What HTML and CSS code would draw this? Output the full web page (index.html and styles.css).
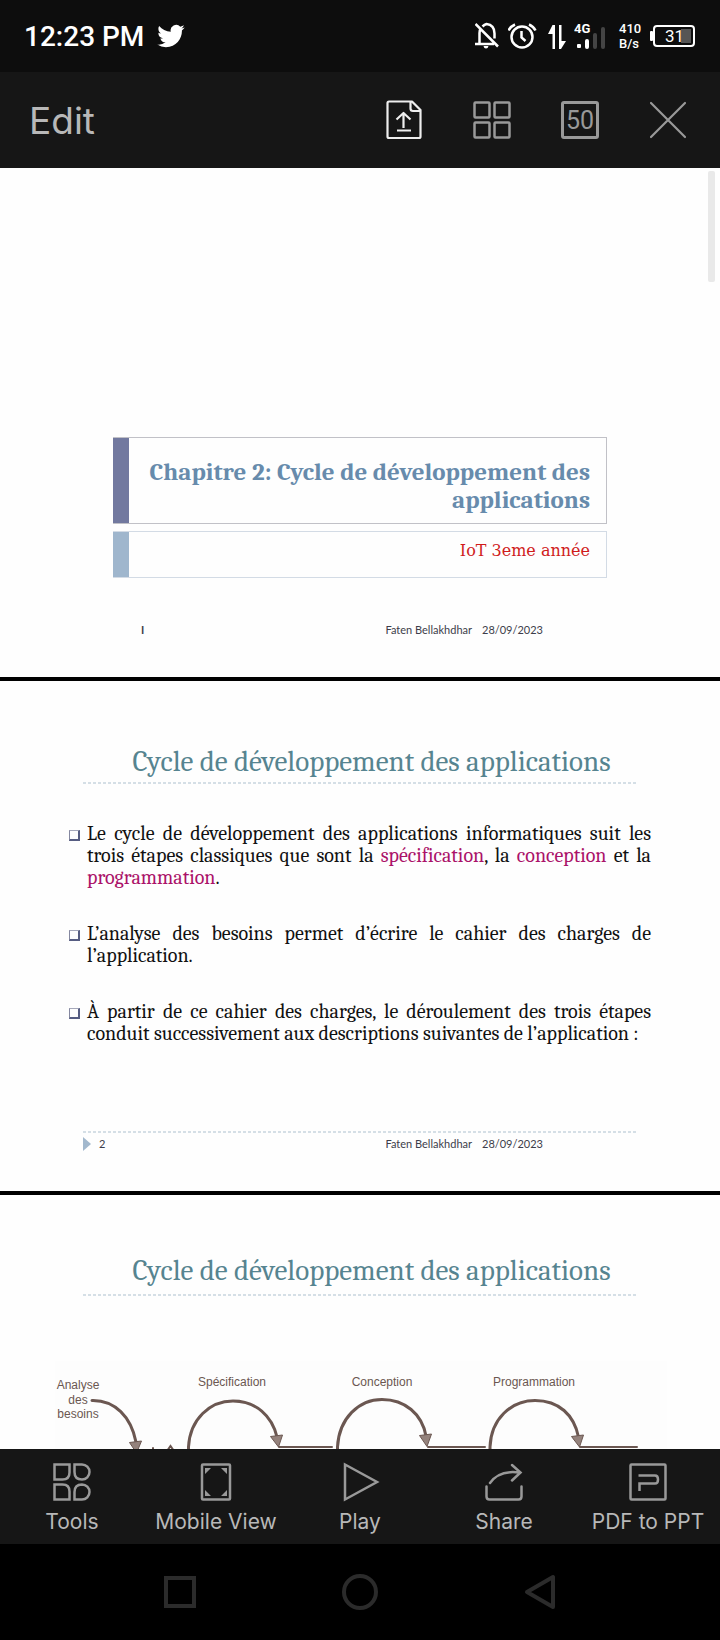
FILE: index.html
```html
<!DOCTYPE html>
<html lang="fr">
<head>
<meta charset="utf-8">
<meta name="viewport" content="width=device-width, initial-scale=1">
<title>Chapitre 2: Cycle de développement des applications</title>
<link rel="stylesheet" href="styles.css">
</head>
<body>
<div class="screen">
  <header class="status">
    <span class="clock">12:23 PM</span>
    <svg class="bird" width="28" height="24" viewBox="0 1.500 24 21" aria-hidden="true"><path fill="#fff" d="M23.950 4.570a10 10 0 0 1-2.820.770 4.960 4.960 0 0 0 2.160-2.720c-.950.550-2 .950-3.130 1.180a4.920 4.920 0 0 0-8.380 4.480C7.690 8.090 4.070 6.130 1.640 3.160a4.820 4.820 0 0 0-.670 2.470c0 1.710.870 3.210 2.190 4.100a4.900 4.900 0 0 1-2.230-.610v.060a4.920 4.920 0 0 0 3.950 4.830 5 5 0 0 1-2.210.080 4.940 4.940 0 0 0 4.600 3.420A9.870 9.870 0 0 1 0 19.540a14 14 0 0 0 7.550 2.210c9.050 0 14-7.500 14-13.980 0-.210 0-.420-.020-.630a9.940 9.940 0 0 0 2.460-2.550z"/></svg>
    <div class="indicators">
      <svg width="25" height="28" viewBox="475 22 25 28" fill="none" stroke="#fff" stroke-width="2.500" aria-hidden="true"><path d="M475.500 24l22.500 22.500M475 44h19M479.500 43V33q0-3 1.500-5M482.500 26.500q2-2 4-2.500 8 1 8 9.500v5"/><path d="M483.500 46h5q-.500 2.500-2.500 2.500t-2.500-2.500z" fill="#fff" stroke="none"/></svg>
      <svg width="30" height="28" viewBox="508 22 30 28" fill="none" stroke="#fff" stroke-width="2.500" aria-hidden="true"><circle cx="522" cy="37" r="10.500"/><path d="M521.500 31v6.500l4 3.500M508.500 30.500q2-4 6.500-6M535.500 30.500q-2-4-6.500-6"/></svg>
      <svg width="20" height="28" viewBox="546 22 20 28" fill="#fff" aria-hidden="true"><path d="M552.500 25h2.500v24h-2.500V34H548zM559 25h2.500v16h4.500l-5 8h-2z"/></svg>
      <svg class="signal" width="37" height="28" viewBox="574 20 37 28" aria-hidden="true"><text x="574" y="31">4G</text><rect x="577" y="42" width="4" height="4" rx="1" fill="#fff"/><rect x="585" y="37" width="4" height="10" rx="2" fill="#fff"/><rect x="593" y="31" width="4" height="16" rx="2" fill="#444"/><rect x="601" y="25" width="4" height="22" rx="2" fill="#444"/></svg>
      <span class="rate">410<br>B/s</span>
      <svg class="battery" width="45" height="28" viewBox="650 22 45 28" aria-hidden="true"><rect x="650" y="31" width="3" height="10" rx="1" fill="#fff"/><rect x="654" y="26" width="40" height="20" rx="3" fill="none" stroke="#fff" stroke-width="2"/><rect x="681" y="29" width="10" height="14" fill="#555"/><text x="665" y="42">31</text></svg>
    </div>
  </header>

  <div class="toolbar">
    <button class="edit">Edit</button>
    <div class="tools">
      <button aria-label="Export"><svg width="40" height="42" viewBox="384 99 40 42" fill="none" stroke="#eee" stroke-width="2.200" stroke-linejoin="round"><path d="M389 101.500h23l8.500 8.500v26.500q0 1.500-1.500 1.500h-30q-1.500 0-1.500-1.500V103q0-1.500 1.500-1.500zM410.500 102v6.500q0 2.500 2.500 2.500h7M403.500 128v-14M396.500 119.500l7-6.500 7 6.500M397 130.500h14"/></svg></button>
      <button aria-label="Thumbnails"><svg width="40" height="42" viewBox="472 99 40 42" fill="none" stroke="#999" stroke-width="2.500"><rect x="474.500" y="102.500" width="15" height="15" rx="1"/><rect x="494.500" y="102.500" width="15" height="15" rx="1"/><rect x="474.500" y="122.500" width="15" height="15" rx="1"/><rect x="494.500" y="122.500" width="15" height="15" rx="1"/></svg></button>
      <button class="count" aria-label="50 pages"><span>50</span></button>
      <button aria-label="Close"><svg width="40" height="42" viewBox="648 99 40 42" fill="none" stroke="#999" stroke-width="2.200" stroke-linecap="round"><path d="M651 103l34 34M685 103l-34 34"/></svg></button>
    </div>
  </div>

  <main class="document">
    <i class="thumb"></i>
    <section class="slide cover">
      <h1 class="cover-title">Chapitre 2: Cycle de développement des applications</h1>
      <p class="cover-sub">IoT 3eme année</p>
      <footer class="foot">
        <b class="page">I</b><span class="author">Faten Bellakhdhar</span><span>28/09/2023</span>
      </footer>
    </section>

    <section class="slide body">
      <h2 class="heading">Cycle de développement des applications</h2>
      <ul class="points">
        <li>Le cycle de développement des applications informatiques suit les trois étapes classiques que sont la <em>spécification</em>, la <em>conception</em> et la <em>programmation</em>.</li>
        <li>L’analyse des besoins permet d’écrire le cahier des charges de l’application.</li>
        <li>À partir de ce cahier des charges, le déroulement des trois étapes conduit successivement aux descriptions suivantes de l’application :</li>
      </ul>
      <footer class="foot ruled">
        <span class="page">2</span><span class="author">Faten Bellakhdhar</span><span>28/09/2023</span>
      </footer>
    </section>

    <section class="slide figure">
      <h2 class="heading">Cycle de développement des applications</h2>
      <svg class="diagram" viewBox="0 1360 720 100" role="img" aria-label="Analyse des besoins, spécification, conception, programmation">
        <rect x="55" y="1362" width="612" height="98" fill="#fdfdfd"/>
        <g class="labels" text-anchor="middle">
          <text x="78" y="1390">Analyse</text><text x="78" y="1405">des</text><text x="78" y="1419">besoins</text>
          <text x="232" y="1387">Spécification</text><text x="382" y="1387">Conception</text><text x="534" y="1387">Programmation</text>
        </g>
        <g fill="none" stroke="#6b5751" stroke-width="3" stroke-linecap="round">
          <path d="M92 1401.500C115 1401 131 1418 136 1443"/>
          <path d="M188.500 1460v-12C190 1420 210 1402 233 1402S272 1417 277 1438"/>
          <path d="M337.500 1460v-12C339 1419 359 1400.500 382 1400.500S422 1415 426 1437"/>
          <path d="M490 1460v-12C491 1420 511 1401.500 535 1401.500S574 1416 578.500 1438"/>
          <path stroke-width="2" d="M279 1448h53M428 1448h57M580 1448h57M167 1452l3.500-5 3.500 5M153 1449v3"/>
        </g>
        <g fill="#94827c" stroke="#6b5751" stroke-linejoin="round">
          <path d="M129.500 1443.500l12-1.500-5 12z"/><path d="M270.500 1437.500l12-1.500-4 12z"/><path d="M419.500 1436.500l12-1.500-4.500 12.500z"/><path d="M571.500 1437.500l12-1.500-4 12z"/>
        </g>
      </svg>
    </section>
  </main>

  <div class="actions">
    <button><svg width="40" height="40" viewBox="52 1462 40 40"><path d="M54.500 1464.500h15v8q0 7-7 7h-8zM74.500 1464.500h7.500a7.500 7.500 0 0 1 0 15q-7.500 0-7.500-7.500zM54.500 1484.500h8q7 0 7 7v8h-15zM82 1484.500a7.500 7.500 0 0 1 0 15h-7.500v-7.500q0-7.500 7.500-7.500z"/></svg>Tools</button>
    <button><svg width="40" height="40" viewBox="196 1462 40 40"><rect x="202" y="1464.500" width="28" height="35" rx="1"/><path class="solid" d="M205 1468h6l-6 6zM227 1468h-6l6 6zM205 1496h6l-6-6zM227 1496h-6l6-6z"/></svg>Mobile View</button>
    <button><svg width="40" height="40" viewBox="340 1462 40 40"><path d="M345 1464.500v35l32-17.500z"/></svg>Play</button>
    <button><svg width="40" height="40" viewBox="484 1462 40 40" stroke-linecap="round"><path d="M486.500 1486.500v10q0 3 3 3h29q3 0 3-3v-10M490 1483q9-13 29-10.500M512 1465l8.500 7.500-8.500 8"/></svg>Share</button>
    <button><svg width="40" height="40" viewBox="628 1462 40 40"><rect x="630.500" y="1464.500" width="35" height="35" rx="1"/><path d="M638.500 1475.500h16.500q3 0 3 4t-3 4h-15.500v7.500"/></svg>PDF to PPT</button>
  </div>

  <nav class="system">
    <button aria-label="Recent"><svg width="40" height="40" viewBox="0 0 40 40"><path d="M6 6h28v28H6z"/></svg></button>
    <button aria-label="Home"><svg width="40" height="40" viewBox="0 0 40 40"><circle cx="20" cy="20" r="16"/></svg></button>
    <button aria-label="Back"><svg width="40" height="40" viewBox="0 0 40 40" stroke-linejoin="round"><path d="M33 5v30L7 20z"/></svg></button>
  </nav>
</div>
</body>
</html>
```
FILE: styles.css
```css
*, *::before { box-sizing: border-box; }
body { margin: 0; background: #000; font-family: Inter, "Liberation Sans", sans-serif; }
h1, h2, p, ul { margin: 0; padding: 0; font-weight: 400; }
button { border: 0; padding: 0; background: none; font: inherit; color: inherit; }
svg { display: block; flex: none; }

.screen { display: flex; flex-direction: column; height: 100vh; }

.status { display: flex; align-items: center; flex: none; height: 72px; padding: 0 25px 0 24px; background: #0d0d0d; color: #fff; font-family: Roboto, sans-serif; font-weight: 500; }
.clock { font-size: 28px; line-height: 32px; padding-top: 2px; }
.bird { margin-left: 13px; }
.indicators { display: flex; align-items: center; gap: 8px; margin-left: auto; }
.signal { font-size: 13px; font-weight: 700; fill: #fff; }
.rate { width: 23px; font-size: 13px; line-height: 15px; }
.battery { font-size: 17px; font-weight: 400; fill: #fff; }

.toolbar { display: flex; align-items: center; justify-content: space-between; flex: none; height: 96px; padding: 0 8px 0 29px; background: #161616; color: #b8b8b8; }
.edit { padding-top: 2px; font-size: 37px; line-height: 44px; }
.tools { display: flex; }
.tools button { display: flex; align-items: center; justify-content: center; width: 88px; height: 96px; }
.count span { width: 38px; height: 38px; border: 3px solid #999; border-radius: 3px; color: #999; font-size: 25px; line-height: 33px; font-family: Roboto, sans-serif; text-align: center; }

.document { position: relative; flex: 1; min-height: 0; overflow: hidden; background: #000; }
.thumb { position: absolute; top: 3px; right: 5px; width: 7px; height: 111px; border-radius: 2px; background: #e9e9e9; }
.slide { background: #fefefe; font-family: Cambria, Caladea, "Liberation Serif", serif; margin-bottom: 4px; }

.cover { padding: 269px 113px 37px; }
.cover-title, .cover-sub { border: 1px solid; border-left: 0; text-align: right; background: linear-gradient(var(--bar), var(--bar)) left / 16px 100% no-repeat border-box; }
.cover-title { --bar: #72799f; padding: 20px 16px 9px 36px; border-color: #c1c1c7; color: #678bac; font-size: 25px; line-height: 28px; font-weight: 700; }
.cover-sub { --bar: #9fb6cd; height: 47px; margin-top: 7px; padding: 6px 16px; border-color: #d3dbe5; color: #d01c1c; font-family: "Bookman Old Style", "DejaVu Serif", serif; font-size: 16px; line-height: 26px; }

.foot { display: flex; align-items: center; gap: 10px; color: #3d3d4a; font-family: "Gill Sans MT", Lato, sans-serif; font-size: 11px; line-height: 20px; }
.cover .foot { padding: 0 64px 0 28px; margin-top: 42px; }
.page { margin-right: auto; }

.body { padding: 61px 69px 37px; }
.heading, .ruled { background: repeating-linear-gradient(90deg, #d5dfe6 0 3px, transparent 3px 5px) bottom / 100% 2px no-repeat; }
.heading { margin: 0 14px; padding: 0 0 2px 23px; color: #568490; font-size: 29px; line-height: 40px; text-align: center; }
.points { display: flex; flex-direction: column; gap: 34px; margin-top: 39px; list-style: none; font-size: 20px; line-height: 22px; color: #111; text-align: justify; }
.points li { position: relative; padding-left: 18px; }
.points li::before { content: ""; position: absolute; left: 0; top: 7px; width: 11px; height: 11px; border: solid #565d82; border-width: 1px 2px 2px 1px; border-top-color: #a5a8ba; border-left-color: #8588a0; }
.points em { color: #ab1269; font-style: normal; }
.ruled { margin: 86px 14px 0; padding: 3px 94px 0 0; background-position: top; }
.ruled::before { content: ""; border: solid transparent; border-width: 7px 0 7px 8px; border-left-color: #a2b8cd; }
.ruled .page { margin-left: -2px; }

.figure { padding: 56px 0 0; margin: 0; }
.figure .heading { margin: 0 83px; padding-bottom: 5px; }
.diagram { width: 100%; height: auto; margin-top: 63px; }
.labels { fill: #6b5751; font-family: "Liberation Sans Narrow", "Arial Narrow", "Liberation Sans", sans-serif; font-size: 12px; }

.actions { display: grid; grid-template-columns: repeat(5, 1fr); flex: none; height: 95px; background: #161616; color: #b8b8b8; }
.actions button { display: flex; flex-direction: column; align-items: center; padding-top: 13px; gap: 6px; font-size: 21px; line-height: 28px; white-space: nowrap; }
.actions svg { fill: none; stroke: #999; stroke-width: 2.5px; }
.actions .solid { fill: #999; stroke: none; }

.system { display: grid; grid-template-columns: repeat(3, 1fr); flex: none; height: 96px; padding: 0 12.5%; }
.system button { display: flex; align-items: center; justify-content: center; }
.system svg { fill: none; stroke: #2b2b2b; stroke-width: 4px; }
```
